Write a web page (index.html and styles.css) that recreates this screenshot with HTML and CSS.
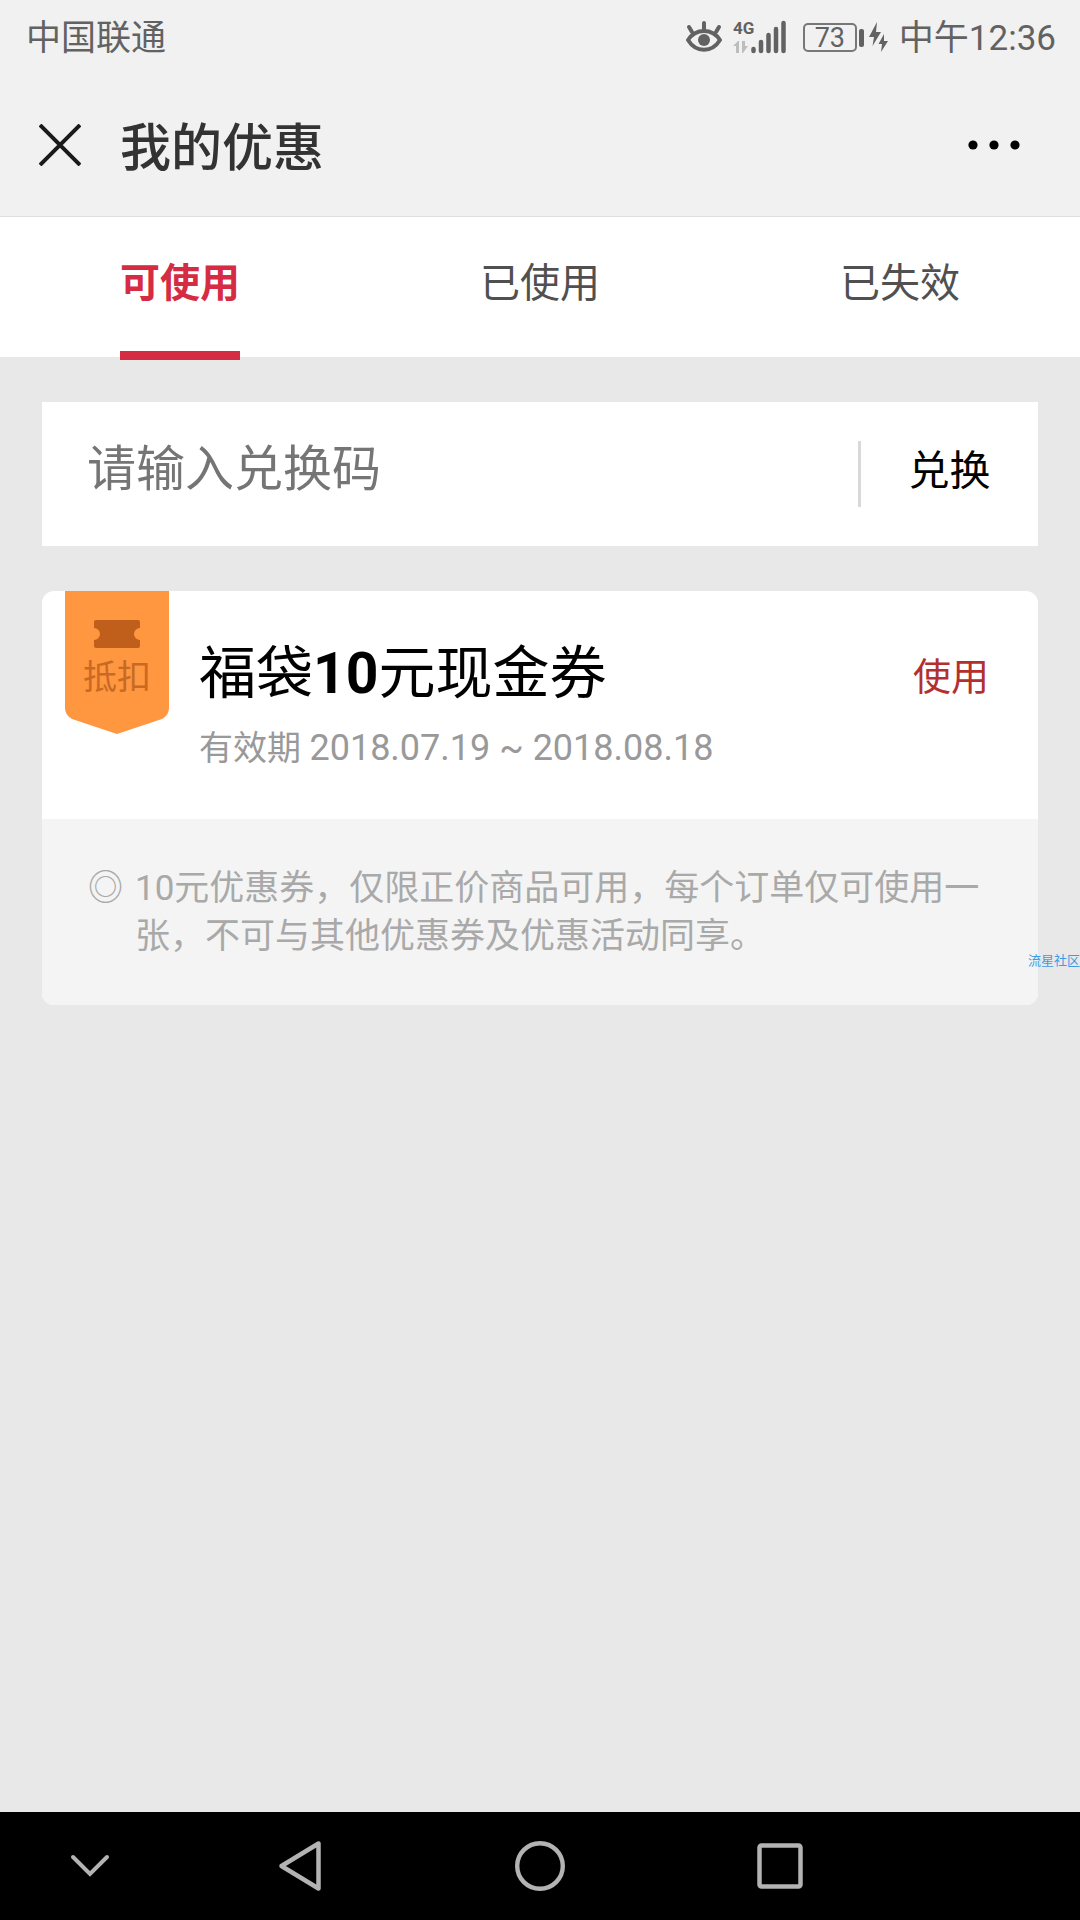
FILE: index.html
```html
<!DOCTYPE html>
<html lang="zh-CN">
<head>
<meta charset="utf-8">
<meta name="viewport" content="width=device-width">
<title>我的优惠</title>
<link rel="stylesheet" href="styles.css">
</head>
<body>
<div class="status">
  <span class="carrier">中国联通</span>
  <svg class="eye" width="38" height="34" viewBox="0 0 38 34" aria-hidden="true">
    <path d="M3 20C11 8 27 8 35 20C27 33 11 33 3 20Z" fill="none" stroke="#626262" stroke-width="4" stroke-linejoin="round"/>
    <circle cx="19" cy="20" r="6" fill="#626262"/>
    <path d="M19 3V10M4 7L7 12M34 7L31 12" fill="none" stroke="#626262" stroke-width="4" stroke-linecap="round"/>
  </svg>
  <svg class="signal" width="54" height="46" viewBox="0 -6 54 46">
    <text class="network" x="0" y="14">4G</text>
    <path d="M0 26L5 21H6V33H3V26ZM9 21H12V26H15L10 33H9Z" fill="#bdbdbd"/>
    <path d="M20.500 29V31M28 22V31M35.500 15V31M43 9V31M50.500 3V31" fill="none" stroke="#626262" stroke-width="4.500" stroke-linecap="round"/>
  </svg>
  <span class="battery">73</span>
  <svg class="bolts" width="20" height="32" viewBox="0 0 20 32" aria-hidden="true">
    <path d="M8 1L0 16H5L3.500 25L12 11H7ZM15 13L9.500 23H13L12 31L19 20H15Z" fill="#626262"/>
  </svg>
  <time class="clock">中午12:36</time>
</div>

<header class="header">
  <button class="icon-button" aria-label="关闭">
    <svg width="42" height="42" viewBox="0 0 42 42"><path d="M1 1L41 41M41 1L1 41" fill="none" stroke="#1a1a1a" stroke-width="4"/></svg>
  </button>
  <h1 class="title">我的优惠</h1>
  <button class="icon-button" aria-label="更多">
    <svg width="52" height="10" viewBox="0 0 52 10"><circle cx="5" cy="5" r="4.600"/><circle cx="26" cy="5" r="4.600"/><circle cx="47" cy="5" r="4.600"/></svg>
  </button>
</header>

<nav class="tabs">
  <a class="tab tab-active" href="#available">可使用</a>
  <a class="tab" href="#used">已使用</a>
  <a class="tab" href="#expired">已失效</a>
</nav>

<main class="content">
  <form class="redeem">
    <input class="code" type="text" placeholder="请输入兑换码" aria-label="兑换码">
    <button class="redeem-button" type="button">兑换</button>
  </form>

  <article class="coupon">
    <div class="coupon-main">
      <div class="badge">
        <svg class="badge-shape" width="104" height="143" viewBox="0 0 104 143" aria-hidden="true">
          <path d="M0 0H104V117Q104 124 97 128L52 143L7 128Q0 124 0 117Z" fill="#ff9640"/>
          <path d="M31 29H73Q75 29 75 31V37A6 6 0 0 0 75 49V55Q75 57 73 57H31Q29 57 29 55V49A6 6 0 0 0 29 37V31Q29 29 31 29Z" fill="#c05f1b"/>
        </svg>
        <span class="badge-label">抵扣</span>
      </div>
      <div class="coupon-text">
        <h2 class="coupon-name">福袋<b>10</b>元现金券</h2>
        <p class="coupon-date">有效期 <span class="dates">2018.07.19 ~ 2018.08.18</span></p>
      </div>
      <a class="use" href="#use">使用</a>
    </div>
    <div class="coupon-note">
      <span>◎</span>
      <p class="note-text">10元优惠券，仅限正价商品可用，每个订单仅可使用一张，不可与其他优惠券及优惠活动同享。</p>
    </div>
  </article>
</main>

<footer class="system-nav">
  <button class="icon-button" aria-label="收起">
    <svg width="40" height="24" viewBox="0 0 40 24"><path d="M3 3L20 20L37 3" fill="none" stroke="#b3b3b3" stroke-width="4" stroke-linecap="round"/></svg>
  </button>
  <button class="icon-button" aria-label="返回">
    <svg width="44" height="52" viewBox="0 0 44 52"><path d="M40.500 3.500V48.500L3.500 26Z" fill="none" stroke="#b3b3b3" stroke-width="4.500" stroke-linejoin="round"/></svg>
  </button>
  <button class="icon-button" aria-label="主页">
    <svg width="50" height="50" viewBox="0 0 50 50"><circle cx="25" cy="25" r="22.800" fill="none" stroke="#b3b3b3" stroke-width="4.400"/></svg>
  </button>
  <button class="icon-button" aria-label="最近任务">
    <svg width="46" height="46" viewBox="0 0 46 46"><rect x="2.500" y="2.500" width="41" height="41" rx="2" fill="none" stroke="#b3b3b3" stroke-width="4.500"/></svg>
  </button>
</footer>
<span class="watermark">流星社区</span>
</body>
</html>
```
FILE: styles.css
```css
* {
  box-sizing: border-box;
}

body {
  margin: 0;
  min-height: 100vh;
  display: flex;
  flex-direction: column;
  position: relative;
  background: #e8e8e8;
  color: #000;
  font-family: Roboto, "Noto Sans CJK SC", sans-serif;
}

h1, h2, p {
  margin: 0;
  font-weight: 400;
}

a {
  text-decoration: none;
}

button {
  padding: 0;
  border: 0;
  background: none;
  color: inherit;
  font: inherit;
}

svg {
  display: block;
}

.status {
  display: flex;
  align-items: center;
  height: 74px;
  padding: 0 24px 0 26px;
  background: #f1f1f1;
  color: #626262;
  font-size: 35px;
  line-height: 48px;
}

.carrier,
.clock {
  padding-top: 3px;
}

.carrier {
  flex: 1;
}

.signal {
  margin: 0 16px 0 10px;
}

.network {
  fill: #626262;
  font-size: 17px;
  font-weight: 700;
}

.battery {
  position: relative;
  width: 54px;
  height: 29px;
  border: 2px solid #777;
  border-radius: 5px;
  font-size: 27px;
  line-height: 26px;
  text-align: center;
}

.battery::after {
  content: "";
  position: absolute;
  left: 54px;
  top: 4px;
  width: 5px;
  height: 18px;
  border-radius: 2px;
  background: #626262;
}

.bolts {
  margin: 0 10px 0 12px;
}

.header {
  display: flex;
  align-items: center;
  height: 143px;
  padding: 0 60px 0 39px;
  border-bottom: 1px solid #dedede;
  background: #f1f1f1;
}

.icon-button {
  display: flex;
  align-items: center;
  justify-content: center;
}

.title {
  flex: 1;
  padding: 8px 0 0 39px;
  color: #333;
  font-size: 51px;
  font-weight: 500;
  line-height: 72px;
}

.tabs {
  display: grid;
  grid-template-columns: repeat(3, 1fr);
  justify-items: center;
  height: 140px;
  background: #fff;
}

.tab {
  position: relative;
  color: #505050;
  font-size: 40px;
  line-height: 134px;
}

.tab-active {
  color: #d62c43;
  font-weight: 700;
}

.tab-active::after {
  content: "";
  position: absolute;
  left: 0;
  right: 0;
  top: 134px;
  height: 9px;
  background: #d62c43;
}

.content {
  flex: 1;
  padding: 45px 42px;
}

.redeem {
  display: flex;
  align-items: center;
  height: 144px;
  margin-bottom: 45px;
  background: #fff;
}

.code {
  flex: 1;
  min-width: 0;
  height: 72px;
  padding: 0 0 10px 45px;
  border: 0;
  outline: 0;
  background: none;
  font: inherit;
  font-size: 49px;
}

.code::placeholder {
  color: #757575;
}

.redeem-button {
  width: 180px;
  height: 66px;
  padding-bottom: 6px;
  border-left: 3px solid #d9d9d9;
  font-size: 41px;
  line-height: 48px;
}

.coupon {
  overflow: hidden;
  border-radius: 12px;
  background: #fff;
}

.coupon-main {
  display: flex;
  height: 228px;
  padding: 0 49px 0 23px;
}

.badge {
  position: relative;
  width: 104px;
  margin-right: 30px;
}

.badge-label {
  position: absolute;
  left: 0;
  right: 0;
  top: 62px;
  color: #c86a24;
  font-size: 34px;
  line-height: 48px;
  text-align: center;
}

.coupon-text {
  flex: 1;
  padding-top: 47px;
}

.coupon-name {
  font-size: 57px;
  line-height: 72px;
}

.coupon-date {
  padding-top: 14px;
  color: #999;
  font-size: 34px;
  line-height: 48px;
}

.dates {
  font-size: 36px;
}

.use {
  padding-top: 62px;
  color: #b3302f;
  font-size: 38px;
  line-height: 48px;
}

.coupon-note {
  display: flex;
  gap: 12px;
  padding: 46px 48px 44px 46px;
  background: #f4f4f4;
  color: #a9a9a9;
  font-size: 35px;
  line-height: 48px;
}

.note-text {
  flex: 1;
}

.system-nav {
  display: grid;
  grid-template-columns: 3fr 4fr 4fr 4fr 3fr;
  height: 108px;
  background: #000;
}

.watermark {
  position: absolute;
  right: 0;
  top: 951px;
  color: #3d9be6;
  font-size: 13px;
  line-height: 20px;
}
```
